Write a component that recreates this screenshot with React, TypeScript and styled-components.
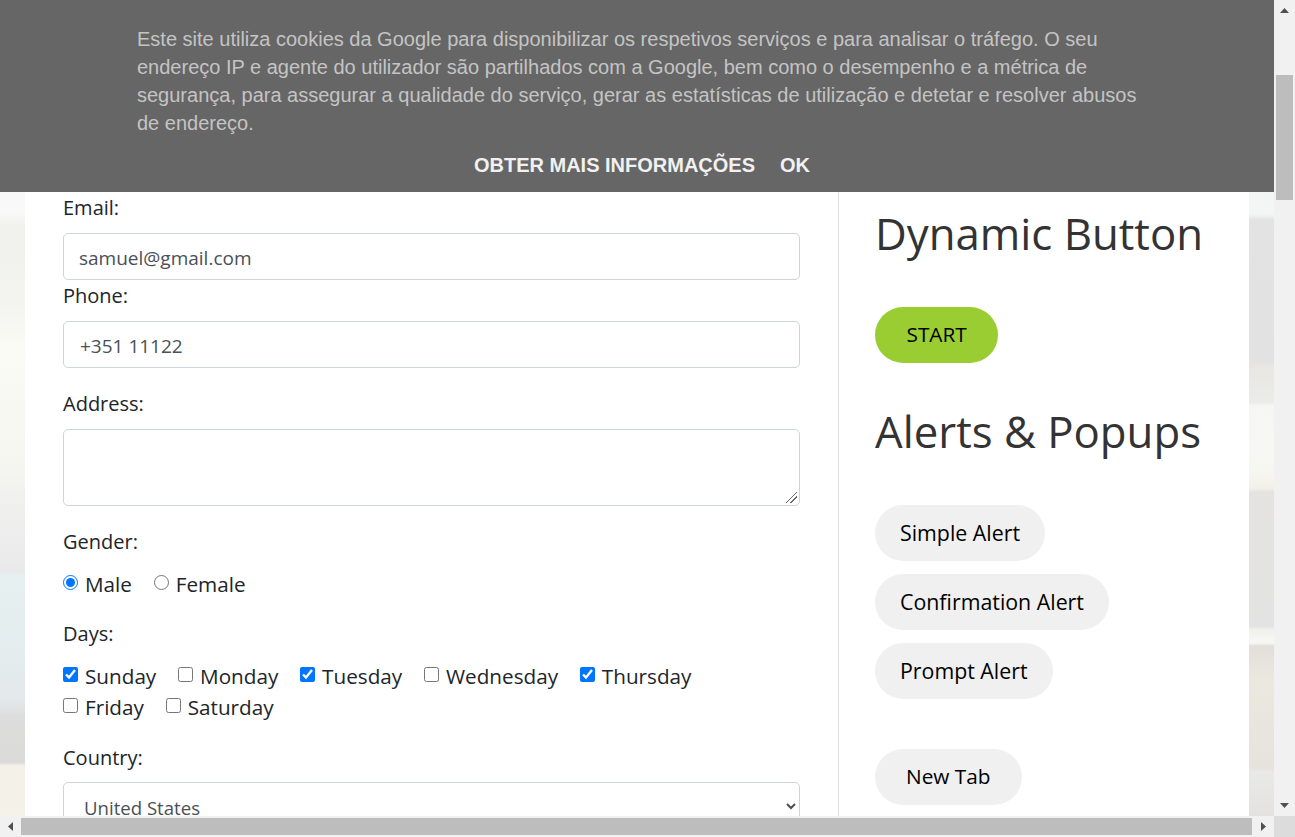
import React from "react";
import styled, { createGlobalStyle } from "styled-components";

const GlobalStyle = createGlobalStyle`
  html, body {
    margin: 0;
    padding: 0;
    height: 100%;
    overflow: hidden;
  }
  #root {
    height: 100%;
  }
`;

const uiFont = `"Open Sans", "Noto Sans", sans-serif`;

const Shell = styled.div`
  display: grid;
  grid-template-columns: 1fr 21px;
  grid-template-rows: 1fr 21px;
  width: 100%;
  height: 100%;
  font-family: ${uiFont};
`;

const Viewport = styled.div`
  overflow: hidden;
  background-repeat: no-repeat;
  background-size: 50% 100%;
  background-position: left top, right top;
  background-image:
    linear-gradient(
      180deg,
      #f9f9f9 0,
      #f9f9f9 212px,
      #f0f0ec 226px,
      #f3f3ef 300px,
      #fbfbf6 350px,
      #f6f6f1 460px,
      #f0f0ee 500px,
      #ebebec 560px,
      #e8e9e9 571px,
      #e6f0f0 575px,
      #e4edef 640px,
      #e3e8ea 700px,
      #dddddd 716px,
      #dadad8 762px,
      #f3f0e8 766px,
      #f5f2ea 816px
    ),
    linear-gradient(
      180deg,
      #f6f7f7 0,
      #f4f6f6 214px,
      #e3e3e3 220px,
      #e2e2e2 360px,
      #e8e7e2 368px,
      #ebebe8 402px,
      #f6f6f5 406px,
      #f7f7f2 470px,
      #f2f1e8 488px,
      #e4e3e0 492px,
      #e3e3e3 626px,
      #f1f1ec 630px,
      #f7f7f4 643px,
      #e2dfda 646px,
      #ebe8e0 680px,
      #e6e3dd 768px,
      #e9e9e7 772px,
      #e4e2df 816px
    );
`;

const Banner = styled.div`
  box-sizing: border-box;
  height: 192px;
  padding: 25px 120px 0 137px;
  background: #666666;
  font-family: "Liberation Sans", Arial, sans-serif;
`;

const BannerText = styled.p`
  margin: 0;
  font-size: 20px;
  line-height: 28px;
  color: #c4c4c4;
`;

const BannerActions = styled.div`
  display: flex;
  justify-content: center;
  gap: 25px;
  margin-top: 14px;
  padding-right: 7px;
`;

const BannerAction = styled.a`
  font-size: 20px;
  line-height: 28px;
  font-weight: 700;
  color: #f1f1f1;
`;

const Card = styled.div`
  display: grid;
  grid-template-columns: 814px 1fr;
  margin: 0 25px;
  background: #ffffff;
  color: #212529;
`;

const FormColumn = styled.div`
  box-sizing: border-box;
  height: 700px;
  padding: 1px 38px 0;
  border-right: 1px solid #dddddd;
`;

const SideColumn = styled.div`
  padding-left: 36px;
`;

const Field = styled.div<{ $gap: number }>`
  margin-bottom: ${(p) => p.$gap}px;
`;

const Label = styled.label<{ $below?: number }>`
  display: block;
  margin-bottom: ${(p) => p.$below ?? 10}px;
  font-size: 20px;
  line-height: 30px;
`;

const TextInput = styled.input<{ $inset: number }>`
  display: block;
  box-sizing: border-box;
  width: 737px;
  height: 47px;
  padding: 2px 15px 0 ${(p) => p.$inset}px;
  border: 1px solid #ced4da;
  border-radius: 5px;
  font-family: ${uiFont};
  font-size: 19px;
  color: #495057;
  background: #ffffff;
  outline: none;
`;

const TextArea = styled.textarea`
  display: block;
  box-sizing: border-box;
  width: 737px;
  height: 77px;
  padding: 6px 15px;
  border: 1px solid #ced4da;
  border-radius: 5px;
  font-family: ${uiFont};
  font-size: 20px;
  outline: none;

  &::-webkit-resizer {
    background-image: linear-gradient(
      135deg,
      transparent 0 46%,
      #6a6a6a 46% 54%,
      transparent 54% 68%,
      #6a6a6a 68% 76%,
      transparent 76%
    );
    background-size: 11px 11px;
    background-position: 2px 2px;
    background-repeat: no-repeat;
  }
`;

const Select = styled.select`
  display: block;
  box-sizing: border-box;
  width: 737px;
  height: 48px;
  padding: 2px 16px 0;
  border: 1px solid #ced4da;
  border-radius: 5px;
  font-family: ${uiFont};
  font-size: 18.6px;
  color: #495057;
  background: #ffffff;
  outline: none;
`;

const OptionRow = styled.div`
  display: flex;
  flex-wrap: wrap;
  column-gap: 21.8px;
  width: 700px;
  line-height: 31px;
`;

const Option = styled.label`
  display: inline-flex;
  align-items: center;
  gap: 7px;
  font-size: 20.7px;
  line-height: inherit;
`;

const Tick = styled.input`
  width: 15px;
  height: 15px;
  margin: 0 0 4px;
`;

const Heading = styled.h2<{ $top: number }>`
  margin: ${(p) => p.$top}px 0 0;
  font-size: 43.75px;
  line-height: 60px;
  font-weight: 400;
  color: #333333;
`;

const PillStack = styled.div<{ $top: number }>`
  display: flex;
  flex-direction: column;
  align-items: flex-start;
  gap: 13px;
  margin-top: ${(p) => p.$top}px;
`;

const Pill = styled.button<{ $accent?: boolean; $pad: number; $size: number }>`
  height: 56px;
  padding: 0 ${(p) => p.$pad}px 2px;
  border: none;
  border-radius: 28px;
  background: ${(p) => (p.$accent ? "#9acd32" : "#f0f0f0")};
  font-family: ${uiFont};
  font-size: ${(p) => p.$size}px;
  color: #000000;
`;

const VerticalBar = styled.div`
  display: flex;
  flex-direction: column;
  align-items: center;
  background: #f1f1f1;
`;

const HorizontalBar = styled.div`
  display: flex;
  align-items: center;
  background: #f1f1f1;
`;

const Corner = styled.div`
  background: #dcdcdc;
`;

const ArrowButton = styled.div<{ $size: number }>`
  flex: none;
  display: flex;
  align-items: center;
  justify-content: center;
  width: ${(p) => p.$size}px;
  height: ${(p) => p.$size}px;
`;

const VerticalThumb = styled.div`
  width: 17px;
  height: 125px;
  margin-top: 54px;
  background: #bdbdbd;
`;

const VerticalTrack = styled.div`
  flex: 1;
`;

const HorizontalThumb = styled.div`
  width: 1231px;
  height: 17px;
  background: #bdbdbd;
`;

const HorizontalTrack = styled.div`
  flex: 1;
`;

const Arrow = ({ dir }: { dir: "up" | "down" | "left" | "right" }) => {
  const points = {
    up: "0,5 9,5 4.5,0",
    down: "0,0 9,0 4.5,5",
    left: "5,0 5,9 0,4.5",
    right: "0,0 0,9 5,4.5",
  }[dir];
  const wide = dir === "up" || dir === "down";
  return (
    <svg width={wide ? 9 : 5} height={wide ? 5 : 9}>
      <polygon points={points} fill="#505050" />
    </svg>
  );
};

const App: React.FC = () => {
  return (
    <>
      <GlobalStyle />
      <Shell>
        <Viewport>
          <Banner>
            <BannerText>
              Este site utiliza cookies da Google para disponibilizar os respetivos serviços e para analisar o
              tráfego. O seu endereço IP e agente do utilizador são partilhados com a Google, bem como o desempenho
              e a métrica de segurança, para assegurar a qualidade do serviço, gerar as estatísticas de utilização
              e detetar e resolver abusos de endereço.
            </BannerText>
            <BannerActions>
              <BannerAction>OBTER MAIS INFORMAÇÕES</BannerAction>
              <BannerAction>OK</BannerAction>
            </BannerActions>
          </Banner>
          <Card>
            <FormColumn>
              <Field $gap={1}>
                <Label>Email:</Label>
                <TextInput $inset={15} defaultValue="samuel@gmail.com" />
              </Field>
              <Field $gap={21}>
                <Label>Phone:</Label>
                <TextInput $inset={16} defaultValue="+351 11122" />
              </Field>
              <Field $gap={21}>
                <Label>Address:</Label>
                <TextArea />
              </Field>
              <Field $gap={19}>
                <Label $below={12}>Gender:</Label>
                <OptionRow>
                  <Option>
                    <Tick type="radio" name="gender" defaultChecked />
                    Male
                  </Option>
                  <Option>
                    <Tick type="radio" name="gender" />
                    Female
                  </Option>
                </OptionRow>
              </Field>
              <Field $gap={20}>
                <Label $below={12}>Days:</Label>
                <OptionRow>
                  <Option>
                    <Tick type="checkbox" defaultChecked />
                    Sunday
                  </Option>
                  <Option>
                    <Tick type="checkbox" />
                    Monday
                  </Option>
                  <Option>
                    <Tick type="checkbox" defaultChecked />
                    Tuesday
                  </Option>
                  <Option>
                    <Tick type="checkbox" />
                    Wednesday
                  </Option>
                  <Option>
                    <Tick type="checkbox" defaultChecked />
                    Thursday
                  </Option>
                  <Option>
                    <Tick type="checkbox" />
                    Friday
                  </Option>
                  <Option>
                    <Tick type="checkbox" />
                    Saturday
                  </Option>
                </OptionRow>
              </Field>
              <Field $gap={0}>
                <Label $below={9}>Country:</Label>
                <Select defaultValue="us">
                  <option value="us">United States</option>
                </Select>
              </Field>
            </FormColumn>
            <SideColumn>
              <Heading $top={11}>Dynamic Button</Heading>
              <PillStack $top={44}>
                <Pill $accent $pad={31.5} $size={20.8}>
                  START
                </Pill>
              </PillStack>
              <Heading $top={38}>Alerts &amp; Popups</Heading>
              <PillStack $top={44}>
                <Pill $pad={25} $size={21.35}>
                  Simple Alert
                </Pill>
                <Pill $pad={25} $size={21.35}>
                  Confirmation Alert
                </Pill>
                <Pill $pad={25} $size={21.35}>
                  Prompt Alert
                </Pill>
              </PillStack>
              <PillStack $top={50}>
                <Pill $pad={31} $size={20.8}>
                  New Tab
                </Pill>
              </PillStack>
            </SideColumn>
          </Card>
        </Viewport>
        <VerticalBar>
          <ArrowButton $size={21}>
            <Arrow dir="up" />
          </ArrowButton>
          <VerticalThumb />
          <VerticalTrack />
          <ArrowButton $size={21}>
            <Arrow dir="down" />
          </ArrowButton>
        </VerticalBar>
        <HorizontalBar>
          <ArrowButton $size={21}>
            <Arrow dir="left" />
          </ArrowButton>
          <HorizontalThumb />
          <HorizontalTrack />
          <ArrowButton $size={21}>
            <Arrow dir="right" />
          </ArrowButton>
        </HorizontalBar>
        <Corner />
      </Shell>
    </>
  );
};

export default App;
